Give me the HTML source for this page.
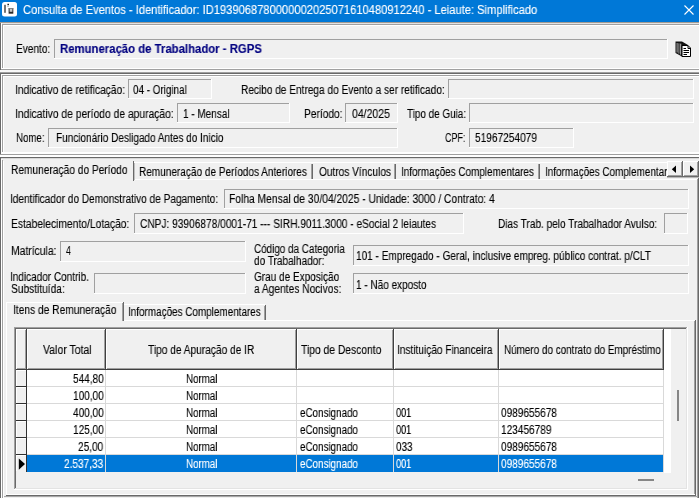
<!DOCTYPE html><html><head><meta charset="utf-8"><style>
html,body{margin:0;padding:0}
body{width:699px;height:498px;overflow:hidden;position:relative;background:#f0f0f0;font-family:"Liberation Sans",sans-serif;font-size:11px;color:#000}
.t{position:absolute;white-space:nowrap;line-height:12px;transform-origin:left top;will-change:transform;-webkit-text-stroke:0.12px currentColor}
.r{position:absolute}
</style></head><body>
<div class="r" style="left:0px;top:0px;width:699px;height:22px;background:#0078d7"></div>
<div class="r" style="left:0px;top:22px;width:699px;height:1px;background:#a39b92"></div>
<svg class="r" style="left:0;top:0" width="20" height="20" viewBox="0 0 20 20">
<rect x="2" y="2" width="15" height="14.5" rx="2.5" fill="#fff"/>
<rect x="4.2" y="4.8" width="1.6" height="8" fill="#555"/>
<rect x="7.4" y="3.8" width="1.6" height="1.4" fill="#222"/>
<rect x="7.4" y="5.8" width="1.2" height="1" fill="#999"/>
<rect x="8.6" y="8" width="4.7" height="5.7" fill="#2a2a2a"/>
<rect x="8.6" y="8" width="4.7" height="0.8" fill="#888"/>
<rect x="9.6" y="8.8" width="2.8" height="3" fill="#c8c8c8"/>
</svg>
<div class="t" style="left:23.00px;top:4px;transform:scaleX(0.9286);font-size:12px;color:#fff;">Consulta de Eventos - Identificador: ID1939068780000002025071610480912240 - Leiaute: Simplificado</div>
<svg class="r" style="left:683px;top:3.5px" width="12" height="12" viewBox="0 0 12 12"><path d="M1.5 1.5L10.5 10.5M10.5 1.5L1.5 10.5" stroke="#fff" stroke-width="1.1"/></svg>
<div class="r" style="left:0px;top:23px;width:1px;height:475px;background:#696969"></div>
<div class="r" style="left:1px;top:23px;width:698px;height:1px;background:#e3e3e3"></div>
<div class="r" style="left:1px;top:23px;width:1px;height:47px;background:#ffffff"></div>
<div class="r" style="left:2px;top:24px;width:697px;height:1px;background:#a0a0a0"></div>
<div class="r" style="left:2px;top:24px;width:1px;height:45px;background:#a0a0a0"></div>
<div class="r" style="left:3px;top:25px;width:696px;height:1px;background:#ffffff"></div>
<div class="r" style="left:3px;top:25px;width:1px;height:43px;background:#ffffff"></div>
<div class="r" style="left:2px;top:68px;width:697px;height:1px;background:#ffffff"></div>
<div class="r" style="left:1px;top:69px;width:698px;height:1px;background:#a0a0a0"></div>
<div class="r" style="left:0px;top:70px;width:699px;height:1px;background:#f8f8f8"></div>
<div class="r" style="left:0px;top:71px;width:699px;height:1px;background:#f8f8f8"></div>
<div class="r" style="left:0px;top:72px;width:699px;height:1px;background:#a0a0a0"></div>
<div class="r" style="left:0px;top:73px;width:699px;height:1px;background:#696969"></div>
<div class="t" style="left:15.60px;top:43px;transform:scaleX(0.8400);font-size:12px;">Evento:</div>
<div class="r" style="left:54px;top:39px;width:614px;height:20px;background:#f0f0f0"></div>
<div class="r" style="left:54px;top:39px;width:614px;height:1px;background:#a0a0a0"></div>
<div class="r" style="left:54px;top:39px;width:1px;height:20px;background:#a0a0a0"></div>
<div class="r" style="left:54px;top:58px;width:614px;height:1px;background:#ffffff"></div>
<div class="r" style="left:667px;top:39px;width:1px;height:20px;background:#ffffff"></div>
<div class="t" style="left:60.30px;top:43px;transform:scaleX(0.9457);font-size:12px;font-weight:bold;color:#000080;">Remuneração de Trabalhador - RGPS</div>
<svg class="r" style="left:674px;top:40px" width="18" height="18" viewBox="0 0 18 18">
<path d="M1.5 1.5 L8 1.5 L14 5 L14 7 L8 7 L8 16.5 L1.5 13 Z" fill="#111"/>
<rect x="2.6" y="3" width="1" height="9.5" fill="#aaa"/>
<rect x="4.4" y="3.3" width="1" height="10.3" fill="#999"/>
<rect x="6.2" y="3.6" width="1" height="11" fill="#bbb"/>
<path d="M8 5.5 L14 5.5 L16.5 8 L16.5 16.5 L8 16.5 Z" fill="#fff" stroke="#000" stroke-width="1"/>
<path d="M14 5.5 L14 8.5 L16.5 8.5" fill="none" stroke="#000" stroke-width="1"/>
<path d="M9.5 8.5h2.5M9.5 10.5h5.5M9.5 12.5h5.5M9.5 14.5h3.5" stroke="#000" stroke-width="1"/>
</svg>
<div class="r" style="left:1px;top:74px;width:698px;height:1px;background:#ffffff"></div>
<div class="r" style="left:1px;top:74px;width:1px;height:80px;background:#ffffff"></div>
<div class="r" style="left:2px;top:75px;width:697px;height:1px;background:#a0a0a0"></div>
<div class="r" style="left:2px;top:75px;width:1px;height:78px;background:#a0a0a0"></div>
<div class="r" style="left:3px;top:76px;width:696px;height:1px;background:#ffffff"></div>
<div class="r" style="left:3px;top:76px;width:1px;height:76px;background:#ffffff"></div>
<div class="r" style="left:2px;top:152px;width:697px;height:1px;background:#ffffff"></div>
<div class="r" style="left:1px;top:153px;width:698px;height:1px;background:#ffffff"></div>
<div class="r" style="left:0px;top:154px;width:699px;height:1px;background:#a0a0a0"></div>
<div class="r" style="left:0px;top:155px;width:699px;height:1px;background:#ffffff"></div>
<div class="r" style="left:0px;top:156px;width:699px;height:1px;background:#ffffff"></div>
<div class="r" style="left:0px;top:157px;width:699px;height:1px;background:#696969"></div>
<div class="r" style="left:1px;top:158px;width:698px;height:1px;background:#d8d8d8"></div>
<div class="t" style="left:14.75px;top:84px;transform:scaleX(0.8548);font-size:12px;">Indicativo de retificação:</div>
<div class="r" style="left:128px;top:79px;width:84px;height:20px;background:#f0f0f0"></div>
<div class="r" style="left:128px;top:79px;width:84px;height:1px;background:#a0a0a0"></div>
<div class="r" style="left:128px;top:79px;width:1px;height:20px;background:#a0a0a0"></div>
<div class="r" style="left:128px;top:98px;width:84px;height:1px;background:#ffffff"></div>
<div class="r" style="left:211px;top:79px;width:1px;height:20px;background:#ffffff"></div>
<div class="t" style="left:133.10px;top:84px;transform:scaleX(0.8223);font-size:12px;">04 - Original</div>
<div class="t" style="left:240.80px;top:84px;transform:scaleX(0.8412);font-size:12px;">Recibo de Entrega do Evento a ser retificado:</div>
<div class="r" style="left:448px;top:79px;width:246px;height:20px;background:#f0f0f0"></div>
<div class="r" style="left:448px;top:79px;width:246px;height:1px;background:#a0a0a0"></div>
<div class="r" style="left:448px;top:79px;width:1px;height:20px;background:#a0a0a0"></div>
<div class="r" style="left:448px;top:98px;width:246px;height:1px;background:#ffffff"></div>
<div class="r" style="left:693px;top:79px;width:1px;height:20px;background:#ffffff"></div>
<div class="t" style="left:14.74px;top:108px;transform:scaleX(0.8590);font-size:12px;">Indicativo de período de apuração:</div>
<div class="r" style="left:177px;top:103px;width:113px;height:20px;background:#f0f0f0"></div>
<div class="r" style="left:177px;top:103px;width:113px;height:1px;background:#a0a0a0"></div>
<div class="r" style="left:177px;top:103px;width:1px;height:20px;background:#a0a0a0"></div>
<div class="r" style="left:177px;top:122px;width:113px;height:1px;background:#ffffff"></div>
<div class="r" style="left:289px;top:103px;width:1px;height:20px;background:#ffffff"></div>
<div class="t" style="left:183.00px;top:108px;transform:scaleX(0.8310);font-size:12px;">1 - Mensal</div>
<div class="t" style="left:303.80px;top:108px;transform:scaleX(0.8483);font-size:12px;">Período:</div>
<div class="r" style="left:345px;top:103px;width:53px;height:20px;background:#f0f0f0"></div>
<div class="r" style="left:345px;top:103px;width:53px;height:1px;background:#a0a0a0"></div>
<div class="r" style="left:345px;top:103px;width:1px;height:20px;background:#a0a0a0"></div>
<div class="r" style="left:345px;top:122px;width:53px;height:1px;background:#ffffff"></div>
<div class="r" style="left:397px;top:103px;width:1px;height:20px;background:#ffffff"></div>
<div class="t" style="left:352.00px;top:108px;transform:scaleX(0.8741);font-size:12px;">04/2025</div>
<div class="t" style="left:407.20px;top:108px;transform:scaleX(0.8251);font-size:12px;">Tipo de Guia:</div>
<div class="r" style="left:469px;top:103px;width:225px;height:20px;background:#f0f0f0"></div>
<div class="r" style="left:469px;top:103px;width:225px;height:1px;background:#a0a0a0"></div>
<div class="r" style="left:469px;top:103px;width:1px;height:20px;background:#a0a0a0"></div>
<div class="r" style="left:469px;top:122px;width:225px;height:1px;background:#ffffff"></div>
<div class="r" style="left:693px;top:103px;width:1px;height:20px;background:#ffffff"></div>
<div class="t" style="left:15.60px;top:132px;transform:scaleX(0.8083);font-size:12px;">Nome:</div>
<div class="r" style="left:48px;top:128px;width:350px;height:20px;background:#f0f0f0"></div>
<div class="r" style="left:48px;top:128px;width:350px;height:1px;background:#a0a0a0"></div>
<div class="r" style="left:48px;top:128px;width:1px;height:20px;background:#a0a0a0"></div>
<div class="r" style="left:48px;top:147px;width:350px;height:1px;background:#ffffff"></div>
<div class="r" style="left:397px;top:128px;width:1px;height:20px;background:#ffffff"></div>
<div class="t" style="left:55.70px;top:132px;transform:scaleX(0.8341);font-size:12px;">Funcionário Desligado Antes do Inicio</div>
<div class="t" style="left:444.90px;top:132px;transform:scaleX(0.7444);font-size:12px;">CPF:</div>
<div class="r" style="left:469px;top:128px;width:105px;height:20px;background:#f0f0f0"></div>
<div class="r" style="left:469px;top:128px;width:105px;height:1px;background:#a0a0a0"></div>
<div class="r" style="left:469px;top:128px;width:1px;height:20px;background:#a0a0a0"></div>
<div class="r" style="left:469px;top:147px;width:105px;height:1px;background:#ffffff"></div>
<div class="r" style="left:573px;top:128px;width:1px;height:20px;background:#ffffff"></div>
<div class="t" style="left:474.80px;top:132px;transform:scaleX(0.8435);font-size:12px;">51967254079</div>
<div class="r" style="left:1px;top:159px;width:1px;height:339px;background:#ffffff"></div>
<div class="r" style="left:2px;top:160px;width:1px;height:338px;background:#a0a0a0"></div>
<div class="r" style="left:3px;top:161px;width:1px;height:337px;background:#ffffff"></div>
<div class="r" style="left:4px;top:161px;width:129px;height:19px;background:#f0f0f0"></div>
<div class="r" style="left:133px;top:161px;width:1px;height:20px;background:#696969"></div>
<div class="r" style="left:134px;top:162px;width:1px;height:18px;background:#c0c0c0"></div>
<div class="t" style="left:10.50px;top:164px;transform:scaleX(0.8479);font-size:12px;">Remuneração do Período</div>
<div class="r" style="left:134px;top:162px;width:534px;height:1px;background:#ffffff"></div>
<div class="r" style="left:312px;top:164px;width:1px;height:15px;background:#696969"></div>
<div class="r" style="left:311px;top:164px;width:1px;height:15px;background:#a0a0a0"></div>
<div class="r" style="left:395px;top:164px;width:1px;height:15px;background:#696969"></div>
<div class="r" style="left:394px;top:164px;width:1px;height:15px;background:#a0a0a0"></div>
<div class="r" style="left:539px;top:164px;width:1px;height:15px;background:#696969"></div>
<div class="r" style="left:538px;top:164px;width:1px;height:15px;background:#a0a0a0"></div>
<div class="t" style="left:138.80px;top:166px;transform:scaleX(0.8365);font-size:12px;">Remuneração de Períodos Anteriores</div>
<div class="t" style="left:318.90px;top:166px;transform:scaleX(0.8434);font-size:12px;">Outros Vínculos</div>
<div class="t" style="left:401.37px;top:166px;transform:scaleX(0.8270);font-size:12px;">Informações Complementares</div>
<div class="r" style="left:0;top:0;width:667px;height:498px;overflow:hidden">
<div class="t" style="left:544.77px;top:166px;transform:scaleX(0.8270);font-size:12px;">Informações Complementares</div>
</div>
<div class="r" style="left:135px;top:179px;width:563px;height:1px;background:#ffffff"></div>
<div class="r" style="left:698px;top:178px;width:1px;height:320px;background:#696969"></div>
<div class="r" style="left:697px;top:179px;width:1px;height:319px;background:#a0a0a0"></div>
<div class="r" style="left:667px;top:161px;width:16px;height:16px;background:#f0f0f0"></div>
<div class="r" style="left:667px;top:161px;width:16px;height:1px;background:#ffffff"></div>
<div class="r" style="left:667px;top:161px;width:1px;height:16px;background:#ffffff"></div>
<div class="r" style="left:667px;top:176px;width:16px;height:1px;background:#696969"></div>
<div class="r" style="left:682px;top:161px;width:1px;height:16px;background:#696969"></div>
<div class="r" style="left:668px;top:175px;width:14px;height:1px;background:#a0a0a0"></div>
<div class="r" style="left:681px;top:162px;width:1px;height:14px;background:#a0a0a0"></div>
<div class="r" style="left:683px;top:161px;width:16px;height:16px;background:#f0f0f0"></div>
<div class="r" style="left:683px;top:161px;width:16px;height:1px;background:#ffffff"></div>
<div class="r" style="left:683px;top:161px;width:1px;height:16px;background:#ffffff"></div>
<div class="r" style="left:683px;top:176px;width:16px;height:1px;background:#696969"></div>
<div class="r" style="left:698px;top:161px;width:1px;height:16px;background:#696969"></div>
<div class="r" style="left:684px;top:175px;width:14px;height:1px;background:#a0a0a0"></div>
<div class="r" style="left:697px;top:162px;width:1px;height:14px;background:#a0a0a0"></div>
<div class="r" style="left:667px;top:177px;width:32px;height:1px;background:#b8b8b8"></div>
<svg class="r" style="left:0;top:0" width="699" height="180"><path d="M676 165.5L676 173L671.8 169.25Z M690 165.5L690 173L694.2 169.25Z" fill="#000"/></svg>
<div class="t" style="left:10.46px;top:193px;transform:scaleX(0.8406);font-size:12px;">Identificador do Demonstrativo de Pagamento:</div>
<div class="r" style="left:224px;top:189px;width:465px;height:20px;background:#f0f0f0"></div>
<div class="r" style="left:224px;top:189px;width:465px;height:1px;background:#a0a0a0"></div>
<div class="r" style="left:224px;top:189px;width:1px;height:20px;background:#a0a0a0"></div>
<div class="r" style="left:224px;top:208px;width:465px;height:1px;background:#ffffff"></div>
<div class="r" style="left:688px;top:189px;width:1px;height:20px;background:#ffffff"></div>
<div class="t" style="left:229.00px;top:193px;transform:scaleX(0.8569);font-size:12px;">Folha Mensal de 30/04/2025 - Unidade: 3000 / Contrato: 4</div>
<div class="t" style="left:11.30px;top:218px;transform:scaleX(0.8566);font-size:12px;">Estabelecimento/Lotação:</div>
<div class="r" style="left:134px;top:213px;width:330px;height:21px;background:#f0f0f0"></div>
<div class="r" style="left:134px;top:213px;width:330px;height:1px;background:#a0a0a0"></div>
<div class="r" style="left:134px;top:213px;width:1px;height:21px;background:#a0a0a0"></div>
<div class="r" style="left:134px;top:233px;width:330px;height:1px;background:#ffffff"></div>
<div class="r" style="left:463px;top:213px;width:1px;height:21px;background:#ffffff"></div>
<div class="t" style="left:139.80px;top:218px;transform:scaleX(0.8460);font-size:12px;">CNPJ: 93906878/0001-71 --- SIRH.9011.3000 - eSocial 2 leiautes</div>
<div class="t" style="left:497.60px;top:218px;transform:scaleX(0.8377);font-size:12px;">Dias Trab. pelo Trabalhador Avulso:</div>
<div class="r" style="left:664px;top:213px;width:24px;height:21px;background:#f0f0f0"></div>
<div class="r" style="left:664px;top:213px;width:24px;height:1px;background:#a0a0a0"></div>
<div class="r" style="left:664px;top:213px;width:1px;height:21px;background:#a0a0a0"></div>
<div class="r" style="left:664px;top:233px;width:24px;height:1px;background:#ffffff"></div>
<div class="r" style="left:687px;top:213px;width:1px;height:21px;background:#ffffff"></div>
<div class="t" style="left:11.30px;top:245px;transform:scaleX(0.8635);font-size:12px;">Matrícula:</div>
<div class="r" style="left:60px;top:241px;width:186px;height:21px;background:#f0f0f0"></div>
<div class="r" style="left:60px;top:241px;width:186px;height:1px;background:#a0a0a0"></div>
<div class="r" style="left:60px;top:241px;width:1px;height:21px;background:#a0a0a0"></div>
<div class="r" style="left:60px;top:261px;width:186px;height:1px;background:#ffffff"></div>
<div class="r" style="left:245px;top:241px;width:1px;height:21px;background:#ffffff"></div>
<div class="t" style="left:65.80px;top:245px;transform:scaleX(0.7143);font-size:12px;">4</div>
<div class="t" style="left:10.47px;top:271px;transform:scaleX(0.8331);font-size:12px;">Indicador Contrib.</div>
<div class="t" style="left:11.30px;top:283px;transform:scaleX(0.8487);font-size:12px;">Substituída:</div>
<div class="r" style="left:94px;top:273px;width:152px;height:21px;background:#f0f0f0"></div>
<div class="r" style="left:94px;top:273px;width:152px;height:1px;background:#a0a0a0"></div>
<div class="r" style="left:94px;top:273px;width:1px;height:21px;background:#a0a0a0"></div>
<div class="r" style="left:94px;top:293px;width:152px;height:1px;background:#ffffff"></div>
<div class="r" style="left:245px;top:273px;width:1px;height:21px;background:#ffffff"></div>
<div class="t" style="left:253.60px;top:243px;transform:scaleX(0.8234);font-size:12px;">Código da Categoria</div>
<div class="t" style="left:253.60px;top:255px;transform:scaleX(0.8375);font-size:12px;">do Trabalhador:</div>
<div class="r" style="left:353px;top:245px;width:336px;height:21px;background:#f0f0f0"></div>
<div class="r" style="left:353px;top:245px;width:336px;height:1px;background:#a0a0a0"></div>
<div class="r" style="left:353px;top:245px;width:1px;height:21px;background:#a0a0a0"></div>
<div class="r" style="left:353px;top:265px;width:336px;height:1px;background:#ffffff"></div>
<div class="r" style="left:688px;top:245px;width:1px;height:21px;background:#ffffff"></div>
<div class="t" style="left:356.30px;top:250px;transform:scaleX(0.8364);font-size:12px;">101 - Empregado - Geral, inclusive empreg. público contrat. p/CLT</div>
<div class="t" style="left:253.60px;top:271px;transform:scaleX(0.8341);font-size:12px;">Grau de Exposição</div>
<div class="t" style="left:253.60px;top:283px;transform:scaleX(0.8500);font-size:12px;">a Agentes Nocivos:</div>
<div class="r" style="left:353px;top:273px;width:336px;height:21px;background:#f0f0f0"></div>
<div class="r" style="left:353px;top:273px;width:336px;height:1px;background:#a0a0a0"></div>
<div class="r" style="left:353px;top:273px;width:1px;height:21px;background:#a0a0a0"></div>
<div class="r" style="left:353px;top:293px;width:336px;height:1px;background:#ffffff"></div>
<div class="r" style="left:688px;top:273px;width:1px;height:21px;background:#ffffff"></div>
<div class="t" style="left:356.30px;top:279px;transform:scaleX(0.8325);font-size:12px;">1 - Não exposto</div>
<div class="t" style="left:13.45px;top:304px;transform:scaleX(0.8523);font-size:12px;">Itens de Remuneração</div>
<div class="r" style="left:123px;top:302px;width:1px;height:19px;background:#696969"></div>
<div class="r" style="left:122px;top:303px;width:1px;height:18px;background:#a0a0a0"></div>
<div class="r" style="left:124px;top:304px;width:141px;height:1px;background:#ffffff"></div>
<div class="r" style="left:265px;top:305px;width:1px;height:16px;background:#696969"></div>
<div class="r" style="left:264px;top:306px;width:1px;height:15px;background:#a0a0a0"></div>
<div class="t" style="left:127.67px;top:306px;transform:scaleX(0.8257);font-size:12px;">Informações Complementares</div>
<div class="r" style="left:124px;top:320px;width:571px;height:1px;background:#ffffff"></div>
<div class="r" style="left:6px;top:302px;width:1px;height:193px;background:#ffffff"></div>
<div class="r" style="left:7px;top:302px;width:116px;height:1px;background:#ffffff"></div>
<div class="r" style="left:695px;top:320px;width:1px;height:176px;background:#696969"></div>
<div class="r" style="left:694px;top:321px;width:1px;height:174px;background:#a0a0a0"></div>
<div class="r" style="left:6px;top:494px;width:689px;height:1px;background:#ffffff"></div>
<div class="r" style="left:6px;top:495px;width:690px;height:1px;background:#696969"></div>
<div class="r" style="left:4px;top:496px;width:694px;height:1px;background:#a8a8a8"></div>
<div class="r" style="left:14px;top:327px;width:674px;height:1px;background:#a0a0a0"></div>
<div class="r" style="left:14px;top:327px;width:1px;height:163px;background:#a0a0a0"></div>
<div class="r" style="left:15px;top:328px;width:672px;height:1px;background:#696969"></div>
<div class="r" style="left:15px;top:328px;width:1px;height:161px;background:#696969"></div>
<div class="r" style="left:14px;top:489px;width:674px;height:1px;background:#ffffff"></div>
<div class="r" style="left:687px;top:327px;width:1px;height:163px;background:#ffffff"></div>
<div class="r" style="left:15px;top:488px;width:672px;height:1px;background:#e3e3e3"></div>
<div class="r" style="left:686px;top:328px;width:1px;height:161px;background:#e3e3e3"></div>
<div class="r" style="left:16px;top:329px;width:648px;height:41px;background:#f0f0f0"></div>
<div class="r" style="left:16px;top:329px;width:10px;height:1px;background:#ffffff"></div>
<div class="r" style="left:16px;top:329px;width:1px;height:40px;background:#ffffff"></div>
<div class="r" style="left:17px;top:368px;width:9px;height:1px;background:#a0a0a0"></div>
<div class="r" style="left:25px;top:330px;width:1px;height:39px;background:#a0a0a0"></div>
<div class="r" style="left:16px;top:369px;width:11px;height:1px;background:#404040"></div>
<div class="r" style="left:26px;top:329px;width:1px;height:41px;background:#404040"></div>
<div class="r" style="left:27px;top:329px;width:78px;height:1px;background:#ffffff"></div>
<div class="r" style="left:27px;top:329px;width:1px;height:40px;background:#ffffff"></div>
<div class="r" style="left:28px;top:368px;width:77px;height:1px;background:#a0a0a0"></div>
<div class="r" style="left:104px;top:330px;width:1px;height:39px;background:#a0a0a0"></div>
<div class="r" style="left:27px;top:369px;width:79px;height:1px;background:#404040"></div>
<div class="r" style="left:105px;top:329px;width:1px;height:41px;background:#404040"></div>
<div class="r" style="left:106px;top:329px;width:190px;height:1px;background:#ffffff"></div>
<div class="r" style="left:106px;top:329px;width:1px;height:40px;background:#ffffff"></div>
<div class="r" style="left:107px;top:368px;width:189px;height:1px;background:#a0a0a0"></div>
<div class="r" style="left:295px;top:330px;width:1px;height:39px;background:#a0a0a0"></div>
<div class="r" style="left:106px;top:369px;width:191px;height:1px;background:#404040"></div>
<div class="r" style="left:296px;top:329px;width:1px;height:41px;background:#404040"></div>
<div class="r" style="left:297px;top:329px;width:96px;height:1px;background:#ffffff"></div>
<div class="r" style="left:297px;top:329px;width:1px;height:40px;background:#ffffff"></div>
<div class="r" style="left:298px;top:368px;width:95px;height:1px;background:#a0a0a0"></div>
<div class="r" style="left:392px;top:330px;width:1px;height:39px;background:#a0a0a0"></div>
<div class="r" style="left:297px;top:369px;width:97px;height:1px;background:#404040"></div>
<div class="r" style="left:393px;top:329px;width:1px;height:41px;background:#404040"></div>
<div class="r" style="left:394px;top:329px;width:104px;height:1px;background:#ffffff"></div>
<div class="r" style="left:394px;top:329px;width:1px;height:40px;background:#ffffff"></div>
<div class="r" style="left:395px;top:368px;width:103px;height:1px;background:#a0a0a0"></div>
<div class="r" style="left:497px;top:330px;width:1px;height:39px;background:#a0a0a0"></div>
<div class="r" style="left:394px;top:369px;width:105px;height:1px;background:#404040"></div>
<div class="r" style="left:498px;top:329px;width:1px;height:41px;background:#404040"></div>
<div class="r" style="left:499px;top:329px;width:164px;height:1px;background:#ffffff"></div>
<div class="r" style="left:499px;top:329px;width:1px;height:40px;background:#ffffff"></div>
<div class="r" style="left:500px;top:368px;width:163px;height:1px;background:#a0a0a0"></div>
<div class="r" style="left:662px;top:330px;width:1px;height:39px;background:#a0a0a0"></div>
<div class="r" style="left:499px;top:369px;width:165px;height:1px;background:#404040"></div>
<div class="r" style="left:663px;top:329px;width:1px;height:41px;background:#404040"></div>
<div class="t" style="left:42.70px;top:344px;transform:scaleX(0.8742);font-size:12px;">Valor Total</div>
<div class="t" style="left:147.70px;top:344px;transform:scaleX(0.8458);font-size:12px;">Tipo de Apuração de IR</div>
<div class="t" style="left:301.30px;top:344px;transform:scaleX(0.8580);font-size:12px;">Tipo de Desconto</div>
<div class="t" style="left:396.86px;top:344px;transform:scaleX(0.8419);font-size:12px;">Instituição Financeira</div>
<div class="t" style="left:503.70px;top:344px;transform:scaleX(0.8240);font-size:12px;">Número do contrato do Empréstimo</div>
<div class="r" style="left:664px;top:329px;width:7px;height:144px;background:#ffffff"></div>
<div class="r" style="left:16px;top:370px;width:10px;height:17px;background:#f0f0f0"></div>
<div class="r" style="left:16px;top:370px;width:1px;height:16px;background:#ffffff"></div>
<div class="r" style="left:16px;top:370px;width:10px;height:1px;background:#ffffff"></div>
<div class="r" style="left:16px;top:386px;width:11px;height:1px;background:#303030"></div>
<div class="r" style="left:26px;top:370px;width:1px;height:17px;background:#303030"></div>
<div class="r" style="left:27px;top:370px;width:637px;height:16px;background:#ffffff"></div>
<div class="r" style="left:27px;top:386px;width:637px;height:1px;background:#d9d9d9"></div>
<div class="r" style="left:105px;top:370px;width:1px;height:17px;background:#d9d9d9"></div>
<div class="r" style="left:296px;top:370px;width:1px;height:17px;background:#d9d9d9"></div>
<div class="r" style="left:393px;top:370px;width:1px;height:17px;background:#d9d9d9"></div>
<div class="r" style="left:498px;top:370px;width:1px;height:17px;background:#d9d9d9"></div>
<div class="r" style="left:663px;top:370px;width:1px;height:17px;background:#d9d9d9"></div>
<div class="t" style="left:72.60px;top:373px;transform:scaleX(0.8400);font-size:12px;">544,80</div>
<div class="t" style="left:185.50px;top:373px;transform:scaleX(0.8130);font-size:12px;">Normal</div>
<div class="r" style="left:16px;top:387px;width:10px;height:17px;background:#f0f0f0"></div>
<div class="r" style="left:16px;top:387px;width:1px;height:16px;background:#ffffff"></div>
<div class="r" style="left:16px;top:387px;width:10px;height:1px;background:#ffffff"></div>
<div class="r" style="left:16px;top:403px;width:11px;height:1px;background:#303030"></div>
<div class="r" style="left:26px;top:387px;width:1px;height:17px;background:#303030"></div>
<div class="r" style="left:27px;top:387px;width:637px;height:16px;background:#ffffff"></div>
<div class="r" style="left:27px;top:403px;width:637px;height:1px;background:#d9d9d9"></div>
<div class="r" style="left:105px;top:387px;width:1px;height:17px;background:#d9d9d9"></div>
<div class="r" style="left:296px;top:387px;width:1px;height:17px;background:#d9d9d9"></div>
<div class="r" style="left:393px;top:387px;width:1px;height:17px;background:#d9d9d9"></div>
<div class="r" style="left:498px;top:387px;width:1px;height:17px;background:#d9d9d9"></div>
<div class="r" style="left:663px;top:387px;width:1px;height:17px;background:#d9d9d9"></div>
<div class="t" style="left:72.60px;top:390px;transform:scaleX(0.8400);font-size:12px;">100,00</div>
<div class="t" style="left:185.50px;top:390px;transform:scaleX(0.8130);font-size:12px;">Normal</div>
<div class="r" style="left:16px;top:404px;width:10px;height:17px;background:#f0f0f0"></div>
<div class="r" style="left:16px;top:404px;width:1px;height:16px;background:#ffffff"></div>
<div class="r" style="left:16px;top:404px;width:10px;height:1px;background:#ffffff"></div>
<div class="r" style="left:16px;top:420px;width:11px;height:1px;background:#303030"></div>
<div class="r" style="left:26px;top:404px;width:1px;height:17px;background:#303030"></div>
<div class="r" style="left:27px;top:404px;width:637px;height:16px;background:#ffffff"></div>
<div class="r" style="left:27px;top:420px;width:637px;height:1px;background:#d9d9d9"></div>
<div class="r" style="left:105px;top:404px;width:1px;height:17px;background:#d9d9d9"></div>
<div class="r" style="left:296px;top:404px;width:1px;height:17px;background:#d9d9d9"></div>
<div class="r" style="left:393px;top:404px;width:1px;height:17px;background:#d9d9d9"></div>
<div class="r" style="left:498px;top:404px;width:1px;height:17px;background:#d9d9d9"></div>
<div class="r" style="left:663px;top:404px;width:1px;height:17px;background:#d9d9d9"></div>
<div class="t" style="left:72.60px;top:407px;transform:scaleX(0.8400);font-size:12px;">400,00</div>
<div class="t" style="left:185.50px;top:407px;transform:scaleX(0.8130);font-size:12px;">Normal</div>
<div class="t" style="left:299.80px;top:407px;transform:scaleX(0.8192);font-size:12px;">eConsignado</div>
<div class="t" style="left:396.00px;top:407px;transform:scaleX(0.7618);font-size:12px;">001</div>
<div class="t" style="left:501.40px;top:407px;transform:scaleX(0.8380);font-size:12px;">0989655678</div>
<div class="r" style="left:16px;top:421px;width:10px;height:17px;background:#f0f0f0"></div>
<div class="r" style="left:16px;top:421px;width:1px;height:16px;background:#ffffff"></div>
<div class="r" style="left:16px;top:421px;width:10px;height:1px;background:#ffffff"></div>
<div class="r" style="left:16px;top:437px;width:11px;height:1px;background:#303030"></div>
<div class="r" style="left:26px;top:421px;width:1px;height:17px;background:#303030"></div>
<div class="r" style="left:27px;top:421px;width:637px;height:16px;background:#ffffff"></div>
<div class="r" style="left:27px;top:437px;width:637px;height:1px;background:#d9d9d9"></div>
<div class="r" style="left:105px;top:421px;width:1px;height:17px;background:#d9d9d9"></div>
<div class="r" style="left:296px;top:421px;width:1px;height:17px;background:#d9d9d9"></div>
<div class="r" style="left:393px;top:421px;width:1px;height:17px;background:#d9d9d9"></div>
<div class="r" style="left:498px;top:421px;width:1px;height:17px;background:#d9d9d9"></div>
<div class="r" style="left:663px;top:421px;width:1px;height:17px;background:#d9d9d9"></div>
<div class="t" style="left:72.60px;top:424px;transform:scaleX(0.8400);font-size:12px;">125,00</div>
<div class="t" style="left:185.50px;top:424px;transform:scaleX(0.8130);font-size:12px;">Normal</div>
<div class="t" style="left:299.80px;top:424px;transform:scaleX(0.8192);font-size:12px;">eConsignado</div>
<div class="t" style="left:396.00px;top:424px;transform:scaleX(0.7618);font-size:12px;">001</div>
<div class="t" style="left:501.40px;top:424px;transform:scaleX(0.8395);font-size:12px;">123456789</div>
<div class="r" style="left:16px;top:438px;width:10px;height:17px;background:#f0f0f0"></div>
<div class="r" style="left:16px;top:438px;width:1px;height:16px;background:#ffffff"></div>
<div class="r" style="left:16px;top:438px;width:10px;height:1px;background:#ffffff"></div>
<div class="r" style="left:16px;top:454px;width:11px;height:1px;background:#303030"></div>
<div class="r" style="left:26px;top:438px;width:1px;height:17px;background:#303030"></div>
<div class="r" style="left:27px;top:438px;width:637px;height:16px;background:#ffffff"></div>
<div class="r" style="left:27px;top:454px;width:637px;height:1px;background:#d9d9d9"></div>
<div class="r" style="left:105px;top:438px;width:1px;height:17px;background:#d9d9d9"></div>
<div class="r" style="left:296px;top:438px;width:1px;height:17px;background:#d9d9d9"></div>
<div class="r" style="left:393px;top:438px;width:1px;height:17px;background:#d9d9d9"></div>
<div class="r" style="left:498px;top:438px;width:1px;height:17px;background:#d9d9d9"></div>
<div class="r" style="left:663px;top:438px;width:1px;height:17px;background:#d9d9d9"></div>
<div class="t" style="left:78.20px;top:441px;transform:scaleX(0.8400);font-size:12px;">25,00</div>
<div class="t" style="left:185.50px;top:441px;transform:scaleX(0.8130);font-size:12px;">Normal</div>
<div class="t" style="left:299.80px;top:441px;transform:scaleX(0.8192);font-size:12px;">eConsignado</div>
<div class="t" style="left:396.00px;top:441px;transform:scaleX(0.8256);font-size:12px;">033</div>
<div class="t" style="left:501.40px;top:441px;transform:scaleX(0.8380);font-size:12px;">0989655678</div>
<div class="r" style="left:16px;top:455px;width:10px;height:17px;background:#f0f0f0"></div>
<div class="r" style="left:16px;top:455px;width:1px;height:16px;background:#ffffff"></div>
<div class="r" style="left:16px;top:455px;width:10px;height:1px;background:#ffffff"></div>
<div class="r" style="left:26px;top:455px;width:1px;height:17px;background:#303030"></div>
<div class="r" style="left:27px;top:455px;width:637px;height:17px;background:#0078d7"></div>
<div class="r" style="left:105px;top:455px;width:1px;height:17px;background:#d9d9d9"></div>
<div class="r" style="left:296px;top:455px;width:1px;height:17px;background:#d9d9d9"></div>
<div class="r" style="left:393px;top:455px;width:1px;height:17px;background:#d9d9d9"></div>
<div class="r" style="left:498px;top:455px;width:1px;height:17px;background:#d9d9d9"></div>
<div class="r" style="left:663px;top:455px;width:1px;height:17px;background:#d9d9d9"></div>
<div class="t" style="left:64.19px;top:458px;transform:scaleX(0.8400);font-size:12px;color:#fff;">2.537,33</div>
<div class="t" style="left:185.50px;top:458px;transform:scaleX(0.8130);font-size:12px;color:#fff;">Normal</div>
<div class="t" style="left:299.80px;top:458px;transform:scaleX(0.8192);font-size:12px;color:#fff;">eConsignado</div>
<div class="t" style="left:396.00px;top:458px;transform:scaleX(0.7618);font-size:12px;color:#fff;">001</div>
<div class="t" style="left:501.40px;top:458px;transform:scaleX(0.8380);font-size:12px;color:#fff;">0989655678</div>
<svg class="r" style="left:0;top:440px" width="40" height="40"><path d="M18.8 18.5L25 24L18.8 29.7Z" fill="#000"/></svg>
<div class="r" style="left:677px;top:390px;width:2px;height:31px;background:#868686"></div>
<div class="r" style="left:638px;top:479px;width:16px;height:2px;background:#868686"></div>
</body></html>
